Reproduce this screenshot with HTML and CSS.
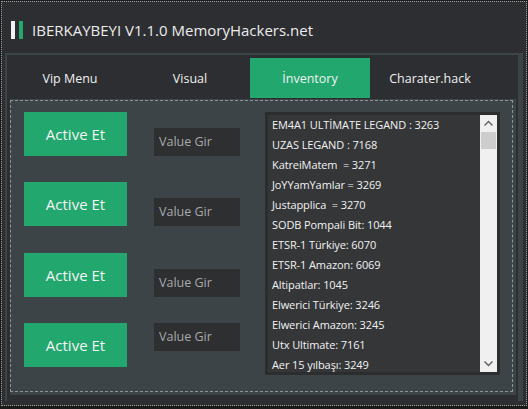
FILE: index.html
```html
<!DOCTYPE html>
<html>
<head>
  <title>IBERKAYBEYI V1.1.0</title>
  <link rel="stylesheet" href="styles.css">
</head>
<body>

  <div class="window">

    <!-- Title -->
    <div class="titlebar">
      <span class="bar bar-white"></span>
      <span class="bar bar-green"></span>
      <span class="title">IBERKAYBEYI V1.1.0 MemoryHackers.net</span>
    </div>

    <!-- Tabs -->
    <div class="tabcontrol">
      <div class="tabs">
        <div class="tab">Vip Menu</div>
        <div class="tab">Visual</div>
        <div class="tab active">İnventory</div>
        <div class="tab">Charater.hack</div>
      </div>

      <div class="tabpage">
        <div class="tabpage-inner">

          <div class="controls">
            <button class="btn">Active Et</button>
            <div class="value">Value Gir</div>
            <button class="btn">Active Et</button>
            <div class="value">Value Gir</div>
            <button class="btn">Active Et</button>
            <div class="value">Value Gir</div>
            <button class="btn">Active Et</button>
            <div class="value top">Value Gir</div>
          </div>

          <div class="listbox">
            <ul class="items">
              <li>EM4A1 ULTİMATE LEGAND : 3263</li>
              <li>UZAS LEGAND : 7168</li>
              <li>KatreiMatem&nbsp; = 3271</li>
              <li>JoYYamYamlar = 3269</li>
              <li>Justapplica&nbsp; = 3270</li>
              <li>SODB Pompali Bit: 1044</li>
              <li>ETSR-1 Türkiye: 6070</li>
              <li>ETSR-1 Amazon: 6069</li>
              <li>Altipatlar: 1045</li>
              <li>Elwerici Türkiye: 3246</li>
              <li>Elwerici Amazon: 3245</li>
              <li>Utx Ultimate: 7161</li>
              <li>Aer 15 yılbaşı: 3249</li>
            </ul>
            <div class="scrollbar">
              <svg class="arrow" width="17" height="17" viewBox="0 0 17 17">
                <path d="M4.5 10.5 L8.5 6.5 L12.5 10.5" fill="none" stroke="#606060" stroke-width="1.4"/>
              </svg>
              <div class="thumb"></div>
              <div class="track"></div>
              <svg class="arrow" width="17" height="17" viewBox="0 0 17 17">
                <path d="M4.5 6.5 L8.5 10.5 L12.5 6.5" fill="none" stroke="#606060" stroke-width="1.4"/>
              </svg>
            </div>
          </div>

        </div>
      </div>
    </div>

  </div>

</body>
</html>
```

FILE: styles.css
```css
body {
  margin: 0;
  background: #1b1b1b;
  font-family: 'Open Sans', 'Noto Sans', sans-serif;
  color: #f1f1f1;
}

.window {
  box-sizing: border-box;
  width: 526px;
  height: 405px;
  margin: 1px;
  border: 1px dotted #a0a0a0;
  background: #2c2e31;
}

/* Title */
.titlebar {
  display: flex;
  align-items: center;
  height: 46px;
  padding: 5px 0 0 9px;
}

.bar {
  width: 4px;
  height: 18px;
  margin-right: 4px;
}

.bar-white {
  background: #f2f2f2;
}

.bar-green {
  background: #22a86e;
  margin-right: 9px;
}

.title {
  font-size: 15px;
  color: #ececec;
}

/* Tab control */
.tabcontrol {
  box-sizing: border-box;
  width: 518px;
  height: 348px;
  margin-left: 3px;
  border: 2px solid #3c4447;
  border-right-width: 5px;
  border-bottom-width: 0;
  padding: 3px 0 0 3px;
}

.tabs {
  display: flex;
  height: 41px;
}

.tab {
  width: 120px;
  height: 40px;
  display: flex;
  align-items: center;
  justify-content: center;
  font-size: 12.5px;
  color: #f0f0f0;
}

.tab.active {
  background: #22a86e;
}

.tabpage {
  box-sizing: border-box;
  width: 506px;
  height: 296px;
  background: #3c4447;
  padding: 1px 3px 3px 0;
}

.tabpage-inner {
  box-sizing: border-box;
  height: 100%;
  border: 1px dashed #8c9597;
  display: flex;
  padding: 11px 0 0 13px;
}

/* Buttons and inputs */
.controls {
  display: grid;
  grid-template-columns: 103px 86px;
  grid-auto-rows: 44px;
  column-gap: 27px;
  row-gap: 26.4px;
  align-content: start;
}

.btn {
  border: none;
  background: #22a86e;
  color: #f4f4f4;
  font-family: inherit;
  font-size: 15px;
  padding: 0;
}

.value {
  align-self: end;
  height: 28px;
  background: #2d2f31;
  color: #a9a9a9;
  font-size: 12.5px;
  line-height: 28px;
  padding-left: 5px;
}

.value.top {
  align-self: start;
}

/* List */
.listbox {
  display: flex;
  width: 235px;
  height: 263px;
  box-sizing: border-box;
  border: 3px solid #2b2d2f;
  background: #343638;
  margin-left: 25px;
}

.items {
  flex: 1;
  list-style: none;
  margin: 0;
  padding: 0 0 0 4px;
  overflow: hidden;
}

.items li {
  height: 20px;
  line-height: 20px;
  font-size: 11px;
  letter-spacing: -0.1px;
  white-space: nowrap;
  color: #f2f2f2;
}

.scrollbar {
  width: 17px;
  display: flex;
  flex-direction: column;
  background: #f0f0f0;
}

.arrow {
  display: block;
}

.thumb {
  height: 17px;
  margin: 0 1px;
  background: #cdcdcd;
}

.track {
  flex: 1;
}
```
